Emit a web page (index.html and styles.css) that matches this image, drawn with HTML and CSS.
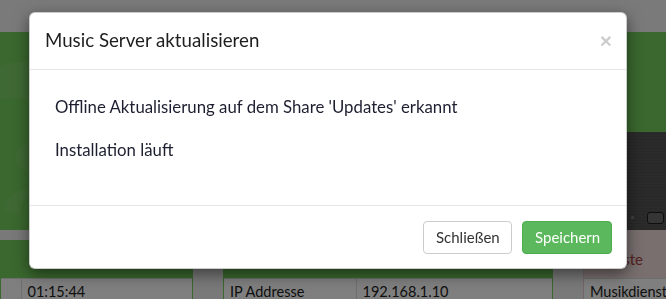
FILE: index.html
```html
<!DOCTYPE html>
<html lang="de">
<head>
    <meta charset="UTF-8">
    <meta name="viewport" content="width=device-width, initial-scale=1.0">
    <title>Music Server</title>
    <link rel="stylesheet" href="styles.css">
</head>
<body>
    <div class="page">
        <div class="topbar"></div>

        <div class="columns">
            <div class="col col-left">
                <div class="hero hero-logo">
                    <svg class="watermark" width="193" height="198" viewBox="0 0 193 198">
                        <path d="M-10 40 C 20 20, 60 30, 80 70 L 60 95 C 45 70, 20 60, -10 70 Z" />
                        <circle cx="30" cy="125" r="14" />
                        <path d="M5 178 C 5 160, 30 150, 40 165 C 30 160, 18 168, 20 182 Z" />
                    </svg>
                </div>
                <div class="panel">
                    <div class="panel-heading"></div>
                    <table class="info">
                        <tr>
                            <td class="info-label"></td>
                            <td>01:15:44</td>
                        </tr>
                    </table>
                </div>
            </div>

            <div class="col col-mid">
                <div class="hero"></div>
                <div class="panel">
                    <div class="panel-heading"></div>
                    <table class="info">
                        <tr>
                            <td class="info-key">IP Addresse</td>
                            <td>192.168.1.10</td>
                        </tr>
                    </table>
                </div>
            </div>

            <div class="col col-right">
                <div class="hero hero-short"></div>
                <div class="device">
                    <span class="device-led"></span>
                    <span class="device-port"></span>
                </div>
                <div class="panel panel-danger">
                    <div class="panel-heading">Dienste</div>
                    <table class="info">
                        <tr>
                            <td>Musikdienst</td>
                        </tr>
                    </table>
                </div>
            </div>
        </div>
    </div>

    <div class="backdrop"></div>

    <div class="modal">
        <div class="modal-content">
            <div class="modal-header">
                <button class="close" type="button">&times;</button>
                <h4 class="modal-title">Music Server aktualisieren</h4>
            </div>
            <div class="modal-body">
                <p>Offline Aktualisierung auf dem Share 'Updates' erkannt</p>
                <p>Installation läuft</p>
            </div>
            <div class="modal-footer">
                <button class="btn btn-default" type="button">Schließen</button>
                <button class="btn btn-success" type="button">Speichern</button>
            </div>
        </div>
    </div>
</body>
</html>
```

FILE: styles.css
```css
* {
    margin: 0;
    padding: 0;
    box-sizing: border-box;
}

body {
    font-family: Lato, "Noto Sans", sans-serif;
    font-size: 14px;
    color: #333;
    background: #f2f2f2;
    overflow: hidden;
}

/* Dashboard behind the dialog */
.topbar {
    height: 32px;
    background: #f4f4f4;
}

.columns {
    display: flex;
    gap: 30px;
    width: 900px;
}

.col {
    display: flex;
    flex-direction: column;
}

.col-left {
    width: 193px;
}

.col-mid {
    width: 330px;
}

.col-right {
    width: 193px;
}

.hero {
    height: 198px;
    background: #74d05c;
    margin-bottom: 10px;
    overflow: hidden;
}

.hero-short {
    height: 100px;
    margin-bottom: 0;
}

.watermark {
    display: block;
    fill: rgba(255, 255, 255, 0.08);
}

.device {
    position: relative;
    height: 98px;
    background: #575757;
    background-image: repeating-linear-gradient(0deg, rgba(0, 0, 0, 0.08) 0 1px, transparent 1px 3px);
}

.device-led {
    position: absolute;
    left: 48px;
    bottom: 11px;
    width: 3px;
    height: 3px;
    border-radius: 50%;
    background: #888;
}

.device-port {
    position: absolute;
    left: 64px;
    bottom: 6px;
    width: 17px;
    height: 12px;
    border: 1px solid #1c1c1c;
    border-radius: 3px;
    background: #6a6a6a;
}

.panel {
    border: 1px solid #74d05c;
    border-top: none;
    background: #fff;
}

.panel-heading {
    height: 38px;
    background: #74d05c;
}

.panel-danger {
    border-color: #ebccd1;
}

.panel-danger .panel-heading {
    height: 48px;
    padding: 20px 0 0 8px;
    background: #f2dede;
    color: #a94442;
    font-size: 15px;
}

.info {
    width: 100%;
    border-collapse: collapse;
    font-size: 14.5px;
    color: #222;
}

.info td {
    padding: 4px 6px 10px;
    border-top: 1px solid #ddd;
    border-left: 1px solid #ddd;
    white-space: nowrap;
}

.info td:first-child {
    border-left: none;
}

.info-label {
    width: 20px;
}

.info-key {
    width: 132px;
}

.backdrop {
    position: fixed;
    inset: 0;
    background: rgba(0, 0, 0, 0.5);
}

/* Dialog */
.modal {
    position: fixed;
    top: 12px;
    left: 29px;
    width: 598px;
}

.modal-content {
    background: #fff;
    border: 1px solid rgba(0, 0, 0, 0.2);
    border-radius: 6px;
    box-shadow: 0 5px 15px rgba(0, 0, 0, 0.5);
}

.modal-header {
    padding: 15px;
    border-bottom: 1px solid #e5e5e5;
}

.modal-title {
    font-size: 18.7px;
    font-weight: 400;
    line-height: 25.7px;
    color: #1e1e1e;
}

.close {
    float: right;
    margin-top: 2px;
    margin-right: -1px;
    border: none;
    background: transparent;
    font-family: "Liberation Sans", sans-serif;
    font-size: 21px;
    font-weight: 700;
    line-height: 1;
    color: #000;
    opacity: 0.2;
    cursor: pointer;
}

.modal-body {
    padding: 25px 25px 24px;
    font-size: 16.8px;
    color: #1d1f30;
}

.modal-body p {
    line-height: 23px;
    margin-bottom: 20px;
}

.modal-footer {
    display: flex;
    justify-content: flex-end;
    gap: 10px;
    padding: 15px 14px 14px;
    border-top: 1px solid #e5e5e5;
}

.btn {
    height: 33px;
    padding: 0 12px;
    border: 1px solid transparent;
    border-radius: 4px;
    font-family: inherit;
    font-size: 15px;
    cursor: pointer;
}

.btn-default {
    width: 89px;
    background: #fff;
    border-color: #ccc;
    color: #333;
}

.btn-success {
    width: 90px;
    background: #5cb85c;
    border-color: #4cae4c;
    color: #fff;
}
```
